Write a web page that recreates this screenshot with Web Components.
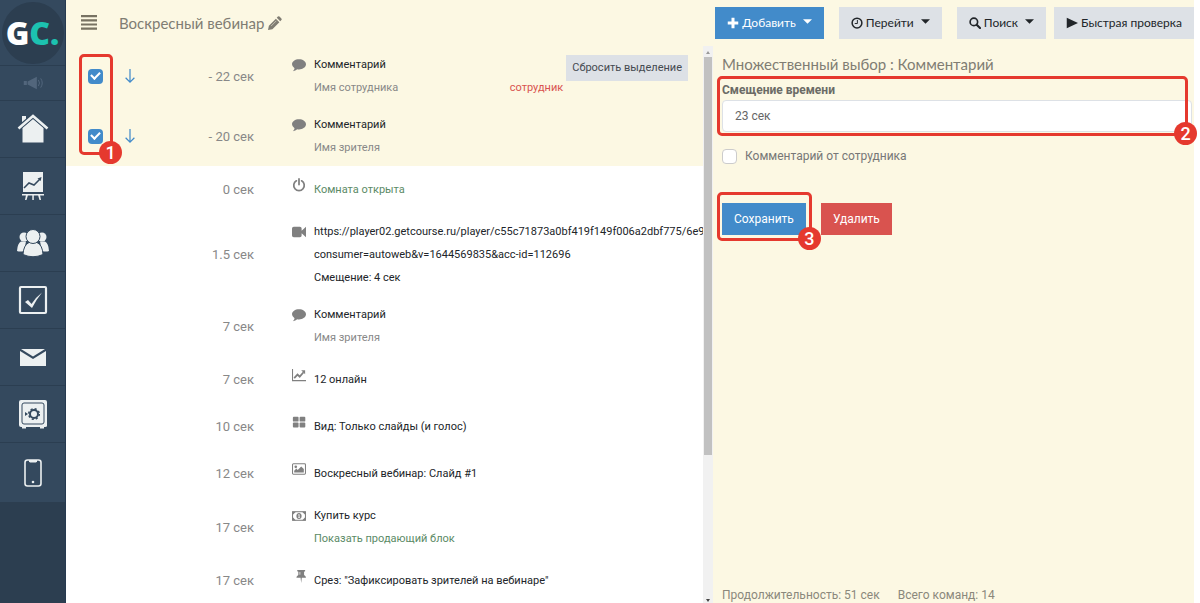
<!DOCTYPE html>
<html lang="ru">
<head>
<meta charset="utf-8">
<meta name="viewport" content="width=device-width, initial-scale=1">
<title>Воскресный вебинар</title>
<style>
:root{
  --cream:#fcf8e3; --blue:#428bca; --red:#d9534f; --mark:#e5392e; --grey:#dde1e6; --text:#212529; --muted:#888;
  --ui:"Lato","Open Sans",sans-serif; --body:"Roboto",sans-serif;
}
html,body{height:100%}
body{margin:0;font-family:var(--body);font-size:11px;color:var(--text);background:#fff}
</style>
</head>
<body>
<webinar-app></webinar-app>
<script>
const ICONS = {
  bars:'<path d="M0 1h16v2.200H0zM0 5.200h16v2.200H0zM0 9.400h16v2.200H0zM0 13.600h16v2.200H0z"/>',
  pencil:'<path d="M1 11l8-8 4 4-8 8-5 1zM10 2l1.300-1.300q.9-.8 1.800 0l2.200 2.200q.8.900 0 1.800L14 6z"/><path d="M3.500 11.500l6-6" stroke="#fcf8e3" stroke-width=".6"/>',
  comment:'<path d="M8 1.500c4.400 0 8 2.400 8 5.700S12.400 13 8 13q-1 0-2-.2Q4 14.800 1 15q1.800-1.600 1.900-3.300Q0 10 0 7.200C0 3.900 3.600 1.500 8 1.500z"/>',
  power:'<path d="M5 3.200a6 6 0 1 0 6 0M8 1v6.500" fill="none" stroke="currentColor" stroke-width="2" stroke-linecap="round"/>',
  video:'<path d="M2 2h7q2 0 2 2v2.500L16 2v12l-5-4.500V12q0 2-2 2H2q-2 0-2-2V4q0-2 2-2z"/>',
  chart:'<path d="M.6 1v13.400H16" fill="none" stroke="currentColor" stroke-width="1.200"/><path d="M2.500 11.500l3.800-4 2.500 2.400 4.400-5" fill="none" stroke="currentColor" stroke-width="2"/><path d="M10.500 2.500H15V7z"/>',
  grid:'<rect x="1" y="2" width="6.500" height="5.500" rx="1"/><rect x="8.700" y="2" width="6.500" height="5.500" rx="1"/><rect x="1" y="8.700" width="6.500" height="5.500" rx="1"/><rect x="8.700" y="8.700" width="6.500" height="5.500" rx="1"/>',
  picture:'<rect x=".6" y="2.100" width="14.800" height="11.800" rx="1" fill="none" stroke="currentColor" stroke-width="1.200"/><circle cx="4.300" cy="5.500" r="1.500"/><path d="M2.500 12V10l2.500-2.500 1.500 1.500 4-4 3 3v4z"/>',
  money:'<rect x=".6" y="3.100" width="14.800" height="9.800" fill="none" stroke="currentColor" stroke-width="1.200"/><path d="M1 3h3.500L1 6.500zM15 3h-3.500L15 6.500zM1 13h3.500L1 9.500zM15 13h-3.500L15 9.500z"/><path fill-rule="evenodd" d="M8 4.500c2 0 3 1.500 3 3.500s-1 3.500-3 3.500S5 10 5 8s1-3.500 3-3.500zM7 6.200v.9h.6v2H7v.9h2.200v-.9h-.6V6z"/>',
  pin:'<path d="M6 1h9v1.500l-1.200.7v3.600Q16 8 16 10h-4.800L10.500 16l-.7-6H5q0-2 2.200-3.200V3.200L6 2.500z"/><path d="M9 3.500v3" stroke="#fff" stroke-width=".8"/>',
  plus:'<path d="M6 1h4v5h5v4h-5v5H6v-5H1V6h5z"/>',
  clock:'<circle cx="8" cy="8" r="6.500" fill="none" stroke="currentColor" stroke-width="2"/><path d="M8.500 4v4.700H5" fill="none" stroke="currentColor" stroke-width="1.300"/>',
  search:'<circle cx="6.500" cy="6.500" r="5" fill="none" stroke="currentColor" stroke-width="2.200"/><path d="M10.200 10.200l4.500 4.500" stroke="currentColor" stroke-width="2.800" stroke-linecap="round"/>',
  play:'<path d="M1 1l15 7-15 7z"/>',
  caret:'<path d="M0 2h16L8 10z"/>',
  arrow:'<path d="M8 0v15M3 10L8 15l5-5" fill="none" stroke="#428bca" stroke-width="1.400"/>',
  horn:'<path d="M6 11l12-6v16L6 15zM1 10.500h4v5H1z"/><path d="M20 9q3 4 0 8M23 7q4 6 0 12" fill="none" stroke="currentColor" stroke-width="1.300"/>',
  home:'<path d="M5.500 15L16 6l10.500 9V29.500h-21zM5 3h4v4L5 10z"/><path d="M1.500 15L16 2.800 30.500 15" fill="none" stroke="#34495e" stroke-width="4.500"/><path d="M1.500 15.500L16 3 30.500 15.500" fill="none" stroke="currentColor" stroke-width="2.600"/>',
  board:'<path d="M6 2h20v20H6zM5 24h22v1.500H5zM9 25h2l-1.500 5h-1.500zM15.300 25h1.500v5h-1.500zM21 25h2l1 5h-1.500z"/><path d="M7 18l5-5 5 2 6-6" fill="none" stroke="#34495e" stroke-width="1.500"/><path d="M20.500 8.500l4-1.500-.8 4z" fill="#34495e"/>',
  people:'<circle cx="7" cy="10" r="4.500"/><circle cx="25" cy="10" r="4.500"/><path d="M0 24q.5-8 4-9.500h5L7 24q-4 1-7 0zM32 24q-.5-8-4-9.500h-5l2 9.500q4 1 7 0z"/><path d="M6 27.500q.5-9.500 6-12h8q5.500 2.500 6 12-10 4.500-20 0z" stroke="#34495e"/><circle cx="16" cy="9.500" r="7" stroke="#34495e"/>',
  check:'<rect x="3" y="3" width="26" height="26" rx="1" fill="none" stroke="currentColor" stroke-width="2.200"/><path d="M8 18l3-2 3.500 4Q19 13 25 8.500 19 16 15 24z"/>',
  mail:'<path d="M3 10l13 8 13-8v15H3z"/><path d="M4 8h24l-12 7.500z"/>',
  safe:'<path d="M4 2h24q2 0 2 2v24q0 1-2 1h-1v1.500h-4V29H9v1.500H5V29H4q-2 0-2-2V4q0-2 2-2z"/><rect x="5" y="5" width="22" height="21" rx="2" fill="none" stroke="#34495e"/><circle cx="17" cy="16" r="4" fill="none" stroke="#34495e" stroke-width="2"/><circle cx="17" cy="16" r="5.300" fill="none" stroke="#34495e" stroke-width="1.500" stroke-dasharray="2.100 2.062"/><path d="M8 14l3 2-3 2z" fill="#34495e"/>',
  phone:'<rect x="8" y="4" width="16" height="26" rx="2.500" fill="none" stroke="currentColor" stroke-width="1.600"/><path d="M12 4h8v1.500l-1 1h-6l-1-1z"/><circle cx="16" cy="26" r="1.300"/>'
};
const BIG = new Set(['home','board','people','check','mail','safe','phone']);

function define(name, html, setup){
  const t = document.createElement('template');
  t.innerHTML = '<style>:host,*{box-sizing:border-box}</style>' + html;
  customElements.define(name, class extends HTMLElement{
    constructor(){ super(); this.attachShadow({mode:'open'}); }
    connectedCallback(){
      if (this.shadowRoot.childNodes.length) return;
      this.shadowRoot.append(t.content.cloneNode(true));
      if (setup) setup(this, this.shadowRoot);
    }
  });
}

define('app-icon', `<style>:host{display:inline-block;width:14px;height:14px;flex:none}svg{display:block;width:100%;height:100%;fill:currentColor}</style><svg aria-hidden="true"></svg>`,
  (el, root) => {
    const n = el.getAttribute('name'), s = root.querySelector('svg');
    s.setAttribute('viewBox', BIG.has(n) ? '0 0 32 32' : n === 'horn' ? '0 0 26 26' : '0 0 16 16');
    s.innerHTML = ICONS[n];
  });

define('app-button', `<style>
:host{display:inline-flex}
button{display:flex;align-items:center;justify-content:center;gap:3px;width:100%;margin:0;border:0;padding:0 12px;height:32px;font:12px/20px var(--ui);color:var(--text);background:var(--grey);white-space:nowrap}
:host([kind=primary]) button{background:var(--blue);color:#fff}
:host([kind=danger]) button{background:var(--red);color:#fff}
:host([size=body]) button{font-family:var(--body)}
:host([size=small]) button{font:11px/16px var(--body);height:26px;padding:0 6px;color:#444a50}
</style><button type="button"><slot></slot></button>`);

define('step-mark', `<style>
:host{position:absolute;border:3px solid var(--mark);border-radius:5px;pointer-events:none;z-index:2}
span{position:absolute;right:-12px;bottom:-12px;width:23px;height:23px;border-radius:50%;background:var(--mark);color:#fff;font:500 18px/23px "Roboto",sans-serif;text-align:center}
</style><span><slot></slot></span>`);

define('side-nav', `<style>
:host{display:block;width:66px;flex:none;background:#2c3e50;border-right:1px solid #263a50;font-family:"Open Sans",sans-serif}
nav{display:grid;grid-template-rows:66px 35px;grid-auto-rows:57px;background:#34495e;padding-bottom:2px}
a{display:grid;place-items:center;border-bottom:1px solid #2b3e51;color:#ecf0f1;text-decoration:none}
a:last-child{border:0}
.logo b{display:grid;place-items:center;width:62px;height:62px;border-radius:50%;background:#2c3e50;font:800 32px/62px "Open Sans",sans-serif;color:#fff}
.logo i{font-style:normal;color:#1cc2b0}
app-icon{width:32px;height:32px}
.horn{color:#52667c}.horn app-icon{width:20px;height:20px}
</style><nav aria-label="Главное меню">
<a class="logo" href="#"><b><span>G<i>C.</i></span></b></a>
<a class="horn" href="#" aria-label="Новости"><app-icon name="horn"></app-icon></a>
<a href="#" aria-label="Главная"><app-icon name="home"></app-icon></a>
<a href="#" aria-label="Тренинги"><app-icon name="board"></app-icon></a>
<a href="#" aria-label="Пользователи"><app-icon name="people"></app-icon></a>
<a href="#" aria-label="Задачи"><app-icon name="check"></app-icon></a>
<a href="#" aria-label="Сообщения"><app-icon name="mail"></app-icon></a>
<a href="#" aria-label="Продажи"><app-icon name="safe"></app-icon></a>
<a href="#" aria-label="Приложение"><app-icon name="phone"></app-icon></a>
</nav>`);

define('top-bar', `<style>
:host{display:flex;align-items:center;height:46px;flex:none;color:#777}
.menu{display:flex;border:0;background:none;padding:0 0 3px;margin:0 22px 0 15px;color:#777262}
.menu app-icon{width:16px;height:16px}
h1{flex:1;display:flex;align-items:center;gap:4px;margin:0;font:400 15px/20px var(--ui);color:#807d73}
.tools{display:flex;gap:15px}
.caret{width:9px;height:9px;margin:0 0 2px 4px}
.icon{width:12px;height:12px}
.last{margin-left:-7px}
</style>
<button class="menu" type="button" aria-label="Меню"><app-icon name="bars"></app-icon></button>
<h1>Воскресный вебинар <app-icon name="pencil"></app-icon></h1>
<div class="tools">
<app-button kind="primary"><app-icon class="icon" name="plus"></app-icon>Добавить<app-icon class="caret" name="caret"></app-icon></app-button>
<app-button><app-icon class="icon" name="clock"></app-icon>Перейти<app-icon class="caret" name="caret"></app-icon></app-button>
<app-button><app-icon class="icon" name="search"></app-icon>Поиск<app-icon class="caret" name="caret"></app-icon></app-button>
<app-button class="last"><app-icon class="icon" name="play"></app-icon>Быстрая проверка</app-button>
</div>`);

define('timeline-row', `<style>
:host{display:flex;min-height:47px;padding:7px 15px 7px 22px;line-height:23px;flex:none}
:host([selected]){background:var(--cream)}
.pick{width:54px;flex:none;display:flex;align-items:center;gap:20px}
input{appearance:none;display:grid;place-items:center;width:15px;height:15px;margin:0;border-radius:4px;background:var(--blue)}
input::after{content:"";width:7px;height:4px;border:solid #fff;border-width:0 0 2px 2px;transform:rotate(-45deg) translate(1px,-1px)}
.time{width:112px;flex:none;align-self:center;text-align:right;font-size:13px;color:var(--muted)}
.icon{width:60px;padding-right:8px;flex:none;height:23px;display:flex;align-items:center;justify-content:flex-end;color:#808080}
.body{flex:1;min-width:0;align-self:center;white-space:nowrap}
::slotted(small){display:block;font-size:11px;color:var(--muted)}
</style>
<div class="pick"><input type="checkbox" checked aria-label="Выбрать команду"><app-icon name="arrow"></app-icon></div>
<div class="time"></div><div class="icon"></div><div class="body"><slot></slot></div><slot name="action"></slot>`,
  (el, root) => {
    root.querySelector('.time').textContent = el.getAttribute('time');
    const i = document.createElement('app-icon'); i.setAttribute('name', el.getAttribute('icon'));
    root.querySelector('.icon').append(i);
    if (!el.hasAttribute('selected')) root.querySelector('.pick').textContent = '';
  });

define('time-line', `<style>
:host{display:flex;min-width:0;min-height:0;position:relative;background:#fff}
.list{flex:1;min-width:0;overflow:hidden;display:flex;flex-direction:column}
timeline-row .pair{display:flex;justify-content:space-between;padding-right:3px}
.staff{color:var(--red)}
timeline-row .ok{color:#5b8a66}
timeline-row.wide{padding-right:0}
app-button{margin-top:2px}
step-mark{left:13px;top:8px;width:34px;height:101px}
</style>
<div class="list">
<timeline-row selected time="- 22 сек" icon="comment">Комментарий<small class="pair"><span>Имя сотрудника</span><span class="staff">сотрудник</span></small><app-button slot="action" size="small">Сбросить выделение</app-button></timeline-row>
<timeline-row selected time="- 20 сек" icon="comment">Комментарий<small>Имя зрителя</small></timeline-row>
<timeline-row time="0 сек" icon="power"><span class="ok">Комната открыта</span></timeline-row>
<timeline-row class="wide" time="1.5 сек" icon="video">https://player02.getcourse.ru/player/c55c71873a0bf419f149f006a2dbf775/6e9b13<br>consumer=autoweb&amp;v=1644569835&amp;acc-id=112696<br>Смещение: 4 сек</timeline-row>
<timeline-row time="7 сек" icon="comment">Комментарий<small>Имя зрителя</small></timeline-row>
<timeline-row time="7 сек" icon="chart">12 онлайн</timeline-row>
<timeline-row time="10 сек" icon="grid">Вид: Только слайды (и голос)</timeline-row>
<timeline-row time="12 сек" icon="picture">Воскресный вебинар: Слайд #1</timeline-row>
<timeline-row time="17 сек" icon="money">Купить курс<small class="ok">Показать продающий блок</small></timeline-row>
<timeline-row time="17 сек" icon="pin">Срез: "Зафиксировать зрителей на вебинаре"</timeline-row>
</div>
<step-mark>1</step-mark>`);

define('scroll-rail', `<style>
:host{display:flex;flex-direction:column;background:#f1f1f1;align-items:center}
i{width:0;height:0;border:2px solid transparent;flex:none}
.up{border-bottom:3px solid #999;border-top:0;margin:5px 0 3px}
.down{border-top:3px solid #444;border-bottom:0;margin:4px 0 1px}
.track{flex:1;width:8px}
.thumb{height:74%;background:#c1c1c1}
</style><i class="up"></i><div class="track"><div class="thumb"></div></div><i class="down"></i>`);

define('edit-panel', `<style>
:host{display:flex;flex-direction:column;min-width:0;padding:8px 2px 0 9px;color:#777}
h2{margin:0;font:400 15px/20px var(--ui);color:#807d73}
.field{position:relative;display:flex;flex-direction:column;margin-top:6px}
label{font-size:12px;line-height:20px}
.field label{font-weight:700;color:#6b6b66}
.text{height:32px;width:100%;margin:0;border:1px solid #dde1e6;border-radius:4px;padding:0 12px;background:#fff;font:12px/20px var(--body);color:#666}
.tick{display:flex;align-items:center;gap:8px;margin-top:14px}
.tick input{appearance:none;width:15px;height:15px;margin:0;border:1px solid #ccc;border-radius:4px;background:#fff}
.actions{display:flex;gap:15px;margin-top:37px}
.save{position:relative;display:flex}
.field step-mark{left:-5px;right:4px;top:-4px;bottom:-4px}
.save step-mark{left:-5px;right:-6px;top:-11px;bottom:-6px}
footer{display:flex;gap:18px;margin-top:auto;font-size:12px;line-height:16px;color:#8b887c}
</style>
<h2>Множественный выбор : Комментарий</h2>
<div class="field"><label for="offset">Смещение времени</label><input class="text" id="offset" type="text" value="23 сек"><step-mark>2</step-mark></div>
<div class="tick"><input type="checkbox" id="staff"><label for="staff">Комментарий от сотрудника</label></div>
<div class="actions"><div class="save"><app-button kind="primary" size="body">Сохранить</app-button><step-mark>3</step-mark></div><app-button kind="danger" size="body">Удалить</app-button></div>
<footer><span>Продолжительность: 51 сек</span><span>Всего команд: 14</span></footer>`);

define('webinar-app', `<style>
:host{display:flex;height:100vh;overflow:hidden}
main{flex:1;min-width:0;display:flex;flex-direction:column;margin-right:6px;background:var(--cream)}
.work{flex:1;min-height:0;display:grid;grid-template:minmax(0,1fr) / minmax(0,637fr) 10px minmax(0,481fr)}
</style>
<side-nav></side-nav>
<main><top-bar></top-bar><div class="work"><time-line></time-line><scroll-rail></scroll-rail><edit-panel></edit-panel></div></main>`);
</script>
</body>
</html>
